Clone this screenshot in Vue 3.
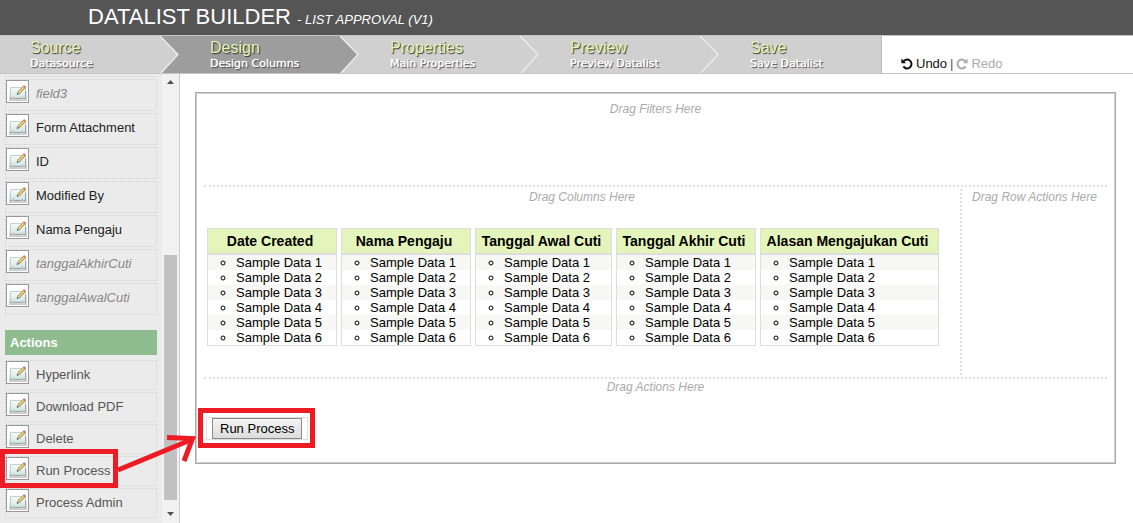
<script setup>
const steps = [
  { title: 'Source', note: 'Datasource' },
  { title: 'Design', note: 'Design Columns', active: true },
  { title: 'Properties', note: 'Main Properties' },
  { title: 'Preview', note: 'Preview Datalist' },
  { title: 'Save', note: 'Save Datalist' },
]
const fields = [
  { name: 'field3', faded: true },
  { name: 'Form Attachment' },
  { name: 'ID' },
  { name: 'Modified By' },
  { name: 'Nama Pengaju' },
  { name: 'tanggalAkhirCuti', faded: true },
  { name: 'tanggalAwalCuti', faded: true },
]
const actions = ['Hyperlink', 'Download PDF', 'Delete', 'Run Process', 'Process Admin']
const columns = ['Date Created', 'Nama Pengaju', 'Tanggal Awal Cuti', 'Tanggal Akhir Cuti', 'Alasan Mengajukan Cuti']
</script>

<template>
  <div class="page">
    <svg class="defs" aria-hidden="true">
      <defs>
        <linearGradient id="pane" x1="0" y1="0" x2="0" y2="1">
          <stop offset="0" stop-color="#f4fafa" />
          <stop offset="0.6" stop-color="#e0eeef" />
          <stop offset="1" stop-color="#cde0e2" />
        </linearGradient>
        <linearGradient id="tile" x1="0" y1="0" x2="0" y2="1">
          <stop offset="0.3" stop-color="#fff" />
          <stop offset="1" stop-color="#ccc" />
        </linearGradient>
        <symbol id="edit" viewBox="0 0 23 23">
          <rect x="0.5" y="0.5" width="22" height="22" fill="#fff" stroke="#999" />
          <rect x="3" y="3" width="18" height="18" fill="url(#tile)" />
          <path d="M4.5 7.5H19.5V18.5H17.5L16 17.5L14.5 18.5H8.5L7 17.5L5.5 18.5H4.5Z" fill="url(#pane)" stroke="#c2d2d4" />
          <path d="M4 18.5H6L7 17.5L8.5 18.5H15L16 17.5L17.5 18.5H19.5V11" fill="none" stroke="#9aa4a6" />
          <path d="M12.2 13.3L18.5 6.8" stroke="#8d7440" stroke-width="3" />
          <path d="M12.4 13L18 7.2" stroke="#f8d878" stroke-width="1.7" />
          <path d="M17.8 7.4L19.2 6" stroke="#c98a62" stroke-width="2.8" />
          <path d="M11.2 14.4L12 13.5" stroke="#444" stroke-width="1.5" />
        </symbol>
      </defs>
    </svg>

    <header class="title-bar">
      <h1>DATALIST BUILDER <small>- LIST APPROVAL (V1)</small></h1>
    </header>

    <div class="toolbar">
      <nav class="steps">
        <a v-for="(s, i) in steps" :key="s.title" href="#" class="step" :class="{ active: s.active }">
          <span class="step-title">{{ s.title }}</span>
          <span class="step-note">{{ s.note }}</span>
          <svg v-if="i < 4" class="chevron" viewBox="0 0 20 37" aria-hidden="true">
            <path v-if="i === 0" d="M0 0L18 18.5L2 37H20V0Z" fill="#9d9d9d" />
            <path v-if="i === 1" d="M0 0L18 18.5L0 37H20V0Z" fill="#d0d0d0" />
            <path d="M0 0L18 18.5L1 37" fill="none" stroke="#ececec" stroke-width="1.4" />
          </svg>
        </a>
      </nav>
      <div class="history">
        <button type="button" class="undo">
          <svg viewBox="0 0 12 12" aria-hidden="true"><path d="M2.2 4A4.4 4.4 0 1 1 2.4 8.4" fill="none" stroke="currentColor" stroke-width="2" /><path d="M0.4 0.6V5.2H5Z" fill="currentColor" /></svg>
          Undo</button>
        <span>|</span>
        <button type="button" class="redo">
          <svg viewBox="0 0 12 12" aria-hidden="true"><path d="M9.8 4A4.4 4.4 0 1 0 9.6 8.4" fill="none" stroke="currentColor" stroke-width="2" /><path d="M11.6 0.6V5.2H7Z" fill="currentColor" /></svg>
          Redo</button>
      </div>
    </div>

    <div class="body">
      <aside class="sidebar">
        <div class="palette">
          <ul class="fields">
            <li v-for="f in fields" :key="f.name" :class="{ faded: f.faded }">
              <svg class="icon" aria-hidden="true"><use href="#edit" /></svg>
              <span>{{ f.name }}</span>
            </li>
          </ul>
          <h2>Actions</h2>
          <ul class="actions">
            <li v-for="a in actions" :key="a">
              <svg class="icon" aria-hidden="true"><use href="#edit" /></svg>
              <span>{{ a }}</span>
            </li>
          </ul>
        </div>
        <div class="scrollbar" aria-hidden="true">
          <svg viewBox="0 0 17 17"><path d="M5 10L8.5 6L12 10Z" fill="#505050" /></svg>
          <div class="track"><div class="thumb"></div></div>
          <svg viewBox="0 0 17 17"><path d="M5 6L8.5 10L12 6Z" fill="#505050" /></svg>
        </div>
      </aside>

      <main>
        <div class="canvas">
          <section class="filters"><p class="hint">Drag Filters Here</p></section>
          <div class="middle">
            <section class="columns">
              <p class="hint">Drag Columns Here</p>
              <div class="column-list">
                <div v-for="c in columns" :key="c" class="column">
                  <h3>{{ c }}</h3>
                  <ul>
                    <li v-for="n in 6" :key="n">Sample Data {{ n }}</li>
                  </ul>
                </div>
              </div>
            </section>
            <section class="row-actions"><p class="hint">Drag Row Actions Here</p></section>
          </div>
          <section class="list-actions">
            <p class="hint">Drag Actions Here</p>
            <div class="dropped"><button type="button">Run Process</button></div>
          </section>
        </div>
      </main>
    </div>

    <svg class="marks" width="320" height="500" aria-hidden="true">
      <g fill="none" stroke="#ed1c24" stroke-width="5">
        <rect x="2.5" y="451.5" width="113" height="34" />
        <rect x="200.5" y="410.5" width="112" height="35" />
        <path d="M118 470L193 439" />
        <path d="M167 437.5L192.5 438.5L184 461" />
      </g>
    </svg>
  </div>
</template>

<style>
body { margin: 0; background: #fff; }
</style>

<style scoped>
* { box-sizing: border-box; }
.page {
  position: relative;
  display: flex;
  flex-direction: column;
  height: 100vh;
  overflow: hidden;
  font: 13px/15px Arial, "Liberation Sans", sans-serif;
  color: #000;
}
.defs { position: absolute; width: 0; height: 0; }
ul, p, h1, h2, h3 { margin: 0; padding: 0; }
.title-bar {
  flex: none;
  height: 35px;
  padding-left: 88px;
  background: #555;
  color: #fff;
}
h1 { font-size: 22px; font-weight: normal; line-height: 33px; white-space: nowrap; }
h1 small { font-size: 13px; font-style: italic; }
.toolbar {
  flex: none;
  display: flex;
  height: 39px;
  border-top: 1px solid #c4c4c4;
  border-bottom: 1px solid #c4c4c4;
}
.steps { display: flex; border-right: 1px solid #bbb; }
.step {
  position: relative;
  display: flex;
  flex-direction: column;
  width: 180px;
  padding: 3px 0 0 30px;
  background: #d0d0d0;
  text-decoration: none;
}
.step:last-child { width: 161px; }
.step.active { background: #9d9d9d; }
.step-title { font-size: 16px; line-height: 18px; color: #e3f5b5; text-shadow: 1px 1px 1px #333; }
.step-note {
  color: #fff;
  font: 11px/13px "DejaVu Sans", sans-serif;
  text-shadow: 0 0 1px #fff, 1px 1px 1px #333;
}
.chevron { position: absolute; top: 0; right: 0; width: 20px; height: 37px; }
.history { display: flex; gap: 3px; align-items: flex-end; padding: 0 0 2px 19px; color: #555; }
.history button {
  display: flex;
  align-items: center;
  gap: 3px;
  padding: 0;
  border: 0;
  background: none;
  font: inherit;
  color: #111;
}
.history .redo { color: #aaa; }
.history svg { width: 12px; height: 12px; }
.body { flex: 1; display: flex; min-height: 0; }
.sidebar {
  flex: none;
  display: flex;
  width: 180px;
  border-right: 1px solid #ccc;
  background: #ebebeb;
}
.palette { flex: 1; padding: 2px 5px 0; overflow: hidden; }
.palette ul { display: flex; flex-direction: column; gap: 2px; list-style: none; }
.palette .fields { padding-top: 2px; border-top: 1px dotted #d3d3d3; }
.palette li {
  display: flex;
  align-items: flex-start;
  gap: 7px;
  height: 32px;
  border: 1px dotted #d3d3d3;
  white-space: nowrap;
}
.palette li span { padding-top: 6px; color: #222; }
.palette li.faded span { color: #888; font-style: italic; }
.palette .actions li { height: 30px; }
.palette .actions span { color: #555; }
.icon { flex: none; width: 23px; height: 23px; }
h2 {
  margin: 15px 0 5px;
  padding-left: 5px;
  background: #8fbc8f;
  color: #fff;
  font-size: 13px;
  line-height: 25px;
}
.scrollbar { flex: none; display: flex; flex-direction: column; width: 17px; background: #f1f1f1; }
.scrollbar svg { width: 17px; height: 17px; }
.track { flex: 1; display: flex; align-items: flex-end; padding: 0 2px 6px; }
.thumb { width: 13px; height: 60%; background: #c1c1c1; }
main { flex: 1; padding: 18px 17px 0 15px; }
.canvas {
  padding: 8px;
  border: 1px solid #aaa;
  box-shadow: inset 0 0 0 1px #d0d0d0;
}
.hint { color: #aaa; font-size: 12px; font-style: italic; line-height: 16px; text-align: center; }
.filters { height: 86px; border-bottom: 2px dotted #ddd; }
.middle { display: flex; height: 192px; padding: 2px 0; border-bottom: 2px dotted #ddd; }
.columns { flex: 1; padding: 0 3px; }
.row-actions { width: 147px; border-left: 2px dotted #ddd; }
.column-list {
  display: grid;
  grid-template-columns: 130px 130px 137px 140px 179px;
  gap: 4px;
  padding-top: 23px;
}
h3 {
  height: 26px;
  padding-right: 4px;
  border: 1px solid #ddd;
  background: #e3f5bb;
  font-size: 14px;
  line-height: 24px;
  text-align: center;
  white-space: nowrap;
}
.column ul {
  padding-left: 28px;
  border: 1px solid #ddd;
  background: repeating-linear-gradient(#f7f7f5 0 15px, #fff 15px 30px);
  list-style: circle;
}
.column li { height: 15px; }
.list-actions { height: 76px; padding: 0 2px; }
.dropped {
  display: flex;
  width: fit-content;
  margin-top: 22px;
  padding: 0 5px;
  border: 1px solid #ddd;
}
.dropped button {
  height: 21px;
  padding: 0 7px;
  border: 1px solid #8a8a8a;
  background: linear-gradient(#f4f4f4, #dcdcdc);
  font: inherit;
  color: #000;
}
.marks { position: absolute; top: 0; left: 0; pointer-events: none; }
</style>
